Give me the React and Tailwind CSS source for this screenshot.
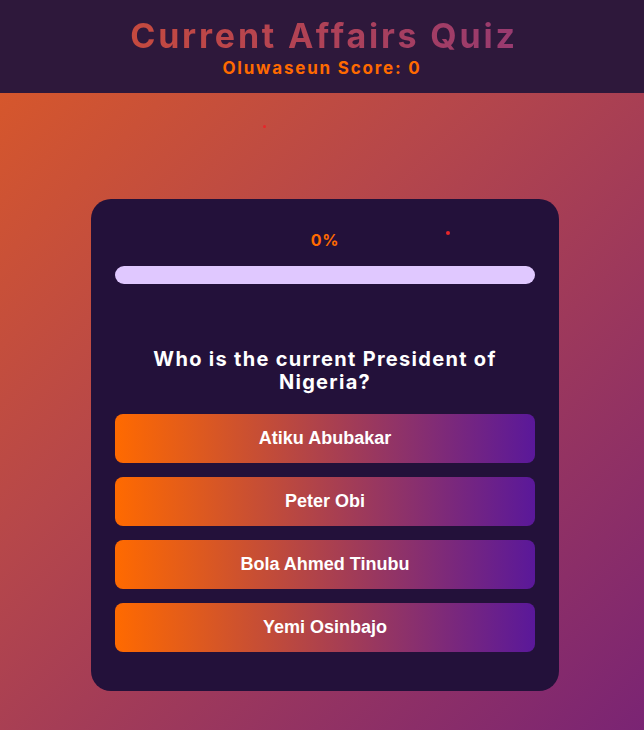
import React, { useState } from 'react';

const options = ['Atiku Abubakar', 'Peter Obi', 'Bola Ahmed Tinubu', 'Yemi Osinbajo'];

const App = () => {
  const [score] = useState(0);
  const [progress] = useState(0);

  return (
    <div className="min-h-screen bg-[linear-gradient(135deg,#dc5a26_0%,#b6474a_40%,#7a2474_100%)] font-['Inter',sans-serif]">
      {/* Header */}
      <header className="h-[93px] bg-[#2e183b] flex flex-col items-center pt-[14px]">
        <h1 className="text-[34px] leading-[44px] font-bold tracking-[2.8px] pl-[4px] bg-[linear-gradient(to_right,#c64a3e,#983a70)] bg-clip-text text-transparent">
          Current Affairs Quiz
        </h1>
        <p className="text-[17px] leading-[20px] font-bold text-[#ff6a00] tracking-[1.8px]">
          Oluwaseun Score: {score}
        </p>
      </header>

      <div className="relative flex justify-center pt-[106px] pb-10 pl-[6px]">
        <span className="absolute left-[263px] top-[32px] w-[3px] h-[3px] rounded-full bg-[#e8262a]" />

        {/* Quiz card */}
        <div className="relative w-[468px] rounded-[20px] bg-[#23113a] px-6 pt-[30px] pb-[39px]">
          <span className="absolute left-[355px] top-[32px] w-[4px] h-[4px] rounded-full bg-[#e8262a]" />
          <p className="text-center text-[16px] leading-[22px] font-bold text-[#ff6a00] tracking-[0.8px]">{progress}%</p>
          <div className="mt-[15px] h-[18px] w-full rounded-full bg-[#e0c8ff]" />

          <h2 className="mt-[64px] text-center text-white text-[20px] leading-[23px] font-bold tracking-[1.3px] px-4">
            Who is the current President of Nigeria?
          </h2>

          <div className="mt-[20px] flex flex-col gap-[14px]">
            {options.map((opt) => (
              <button
                key={opt}
                className="h-[49px] w-full rounded-[8px] bg-[linear-gradient(to_right,#ff6a00,#5a189a)] text-white text-[18px] font-bold font-['Liberation_Sans',Arial,sans-serif]"
              >
                {opt}
              </button>
            ))}
          </div>
        </div>
      </div>
    </div>
  );
};

export default App;
